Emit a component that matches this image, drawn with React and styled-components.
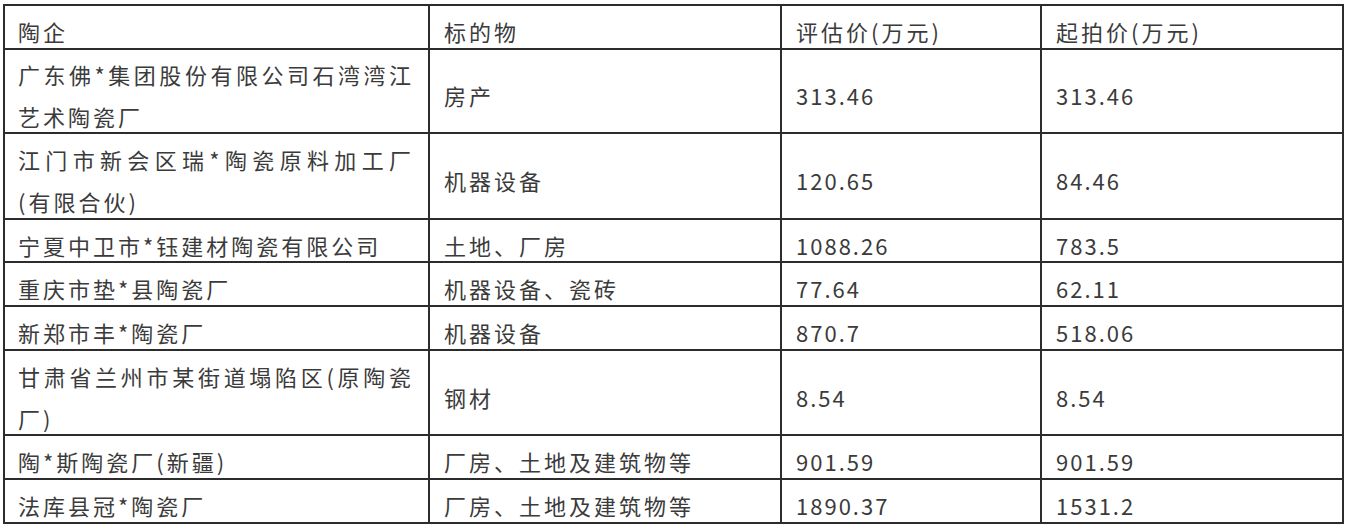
import React from 'react';
import styled, { createGlobalStyle } from 'styled-components';

const GlobalStyle = createGlobalStyle`
    body {
        margin: 0;
        background: #fff;
        font-family: "Noto Sans CJK SC", "Noto Sans", sans-serif;
    }
`;

const header = ['陶企', '标的物', '评估价(万元)', '起拍价(万元)'];

const rows = [
    { h: 82, cells: [['广东佛*集团股份有限公司石湾湾江', '艺术陶瓷厂'], ['房产'], ['313.46'], ['313.46']] },
    { h: 84, cells: [['江门市新会区瑞*陶瓷原料加工厂', '(有限合伙)'], ['机器设备'], ['120.65'], ['84.46']] },
    { h: 41, cells: [['宁夏中卫市*钰建材陶瓷有限公司'], ['土地、厂房'], ['1088.26'], ['783.5']] },
    { h: 42, cells: [['重庆市垫*县陶瓷厂'], ['机器设备、瓷砖'], ['77.64'], ['62.11']] },
    { h: 42, cells: [['新郑市丰*陶瓷厂'], ['机器设备'], ['870.7'], ['518.06']] },
    { h: 83, cells: [['甘肃省兰州市某街道塌陷区(原陶瓷', '厂)'], ['钢材'], ['8.54'], ['8.54']] },
    { h: 42, cells: [['陶*斯陶瓷厂(新疆)'], ['厂房、土地及建筑物等'], ['901.59'], ['901.59']] },
    { h: 42, cells: [['法库县冠*陶瓷厂'], ['厂房、土地及建筑物等'], ['1890.37'], ['1531.2']] },
];

export default function App() {
    return (
        <>
            <GlobalStyle />
            <Table>
                <Row $h={42}>
                    {header.map((t) => (
                        <Cell key={t}>
                            <Line>{t}</Line>
                        </Cell>
                    ))}
                </Row>
                {rows.map((row, i) => (
                    <Row key={i} $h={row.h}>
                        {row.cells.map((lines, j) => (
                            <Cell key={j}>
                                {lines.map((line, k) => (
                                    <Line
                                        key={k}
                                        $numeric={j >= 2}
                                        $justify={k < lines.length - 1}
                                    >
                                        {line}
                                    </Line>
                                ))}
                            </Cell>
                        ))}
                    </Row>
                ))}
            </Table>
        </>
    );
}

const Table = styled.div`
    display: flex;
    flex-direction: column;
    gap: 2px;
    padding: 2px;
    margin: 4px 0 0 3px;
    width: max-content;
    background: #2c2c2c;
`;

const Row = styled.div`
    display: grid;
    grid-template-columns: 423px 350px 258px 300px;
    gap: 2px;
    height: ${(p) => p.$h}px;
`;

const Cell = styled.div`
    display: flex;
    flex-direction: column;
    justify-content: center;
    gap: 10px;
    padding: 8px 14px 0 14px;
    background: #fff;
    color: #3b3b3b;
    font-size: 22px;
    &:first-child {
        padding-left: 13px;
    }
`;

const Line = styled.div`
    line-height: 32px;
    white-space: nowrap;
    letter-spacing: ${(p) => (p.$numeric ? '2px' : '3px')};
    text-align: ${(p) => (p.$justify ? 'justify' : 'left')};
    text-align-last: ${(p) => (p.$justify ? 'justify' : 'auto')};
    text-justify: inter-character;
`;
